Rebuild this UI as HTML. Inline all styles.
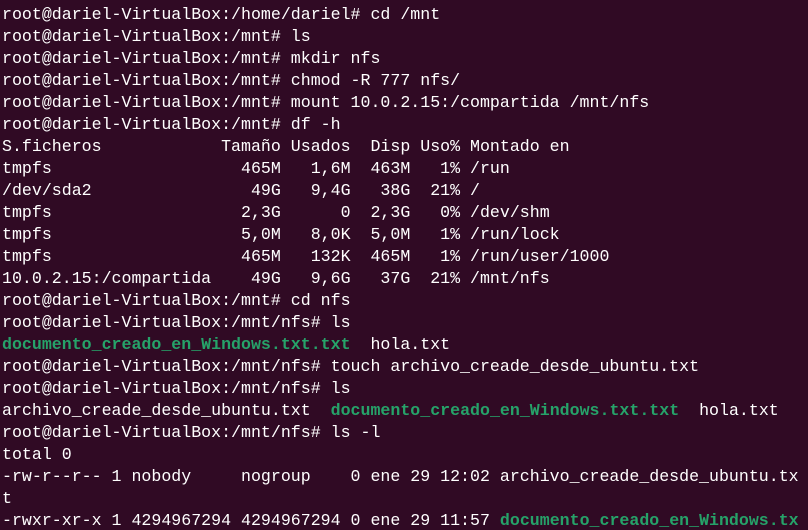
<!DOCTYPE html>
<html><head><meta charset="utf-8"><style>
html,body{margin:0;padding:0;background:#300a24;width:808px;height:530px;overflow:hidden}
pre{margin:0;padding:4px 0 0 2px;font-family:"Liberation Mono",monospace;font-size:16.6px;line-height:22px;color:#ffffff;white-space:pre}
.g{color:#26a269;font-weight:bold}
</style></head><body><pre>root@dariel-VirtualBox:/home/dariel# cd /mnt
root@dariel-VirtualBox:/mnt# ls
root@dariel-VirtualBox:/mnt# mkdir nfs
root@dariel-VirtualBox:/mnt# chmod -R 777 nfs/
root@dariel-VirtualBox:/mnt# mount 10.0.2.15:/compartida /mnt/nfs
root@dariel-VirtualBox:/mnt# df -h
S.ficheros            Tamaño Usados  Disp Uso% Montado en
tmpfs                   465M   1,6M  463M   1% /run
/dev/sda2                49G   9,4G   38G  21% /
tmpfs                   2,3G      0  2,3G   0% /dev/shm
tmpfs                   5,0M   8,0K  5,0M   1% /run/lock
tmpfs                   465M   132K  465M   1% /run/user/1000
10.0.2.15:/compartida    49G   9,6G   37G  21% /mnt/nfs
root@dariel-VirtualBox:/mnt# cd nfs
root@dariel-VirtualBox:/mnt/nfs# ls
<span class="g">documento_creado_en_Windows.txt.txt</span>  hola.txt
root@dariel-VirtualBox:/mnt/nfs# touch archivo_creade_desde_ubuntu.txt
root@dariel-VirtualBox:/mnt/nfs# ls
archivo_creade_desde_ubuntu.txt  <span class="g">documento_creado_en_Windows.txt.txt</span>  hola.txt
root@dariel-VirtualBox:/mnt/nfs# ls -l
total 0
-rw-r--r-- 1 nobody     nogroup    0 ene 29 12:02 archivo_creade_desde_ubuntu.tx
t
-rwxr-xr-x 1 4294967294 4294967294 0 ene 29 11:57 <span class="g">documento_creado_en_Windows.tx</span></pre></body></html>
